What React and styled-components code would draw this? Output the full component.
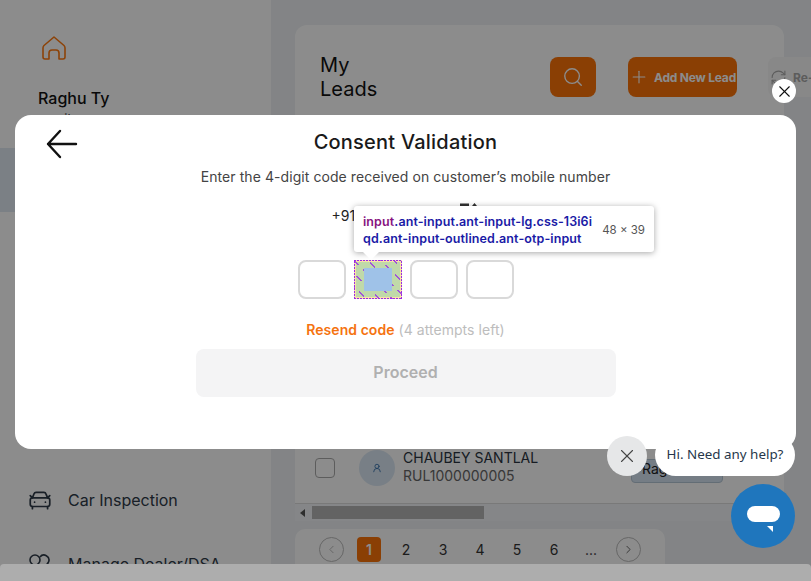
import React from 'react';
import styled, { createGlobalStyle } from 'styled-components';
import { CarFront, Search, Plus, RefreshCw, X, ChevronLeft, ChevronRight, ChevronDown, UserRound } from 'lucide-react';

const GlobalStyle = createGlobalStyle`
  html, body { margin: 0; padding: 0; height: 100%; overflow: hidden; }
  body { font-family: Inter, "Liberation Sans", sans-serif; background: #eef1f4; }
  * { box-sizing: border-box; }
`;

const Page = styled.div`
  display: flex;
  width: 811px;
  height: 581px;
  overflow: hidden;
  background: #eef1f4;
`;

const Sidebar = styled.aside`
  flex: 0 0 271px;
  display: flex;
  flex-direction: column;
  background: #fff;
  padding-top: 36px;
`;

const LogoMark = styled.svg`
  flex: none;
  display: block;
  width: 24px;
  height: 24px;
  margin-left: 42px;
  color: #ff7a10;
`;

const UserName = styled.div`
  margin: 28px 0 0 38px;
  font-size: 16px;
  line-height: 20px;
  font-weight: 500;
  color: #111;
`;

const UserRole = styled.div`
  margin: 3px 0 0 38px;
  font-size: 13px;
  line-height: 16px;
  color: #444;
`;

const ActiveItem = styled.div`
  flex: none;
  margin-top: 21px;
  height: 64px;
  background: #e0e9f2;
`;

const NavList = styled.nav`
  margin-top: 277px;
  display: flex;
  flex-direction: column;
  gap: 42px;
  padding-left: 27px;
`;

const NavItem = styled.div`
  display: flex;
  align-items: center;
  gap: 15px;
  height: 22px;
  font-size: 16px;
  color: #2e3a47;
`;

const Main = styled.main`
  flex: 1;
  min-width: 0;
  padding: 25px 27px 0 24px;
  display: flex;
  flex-direction: column;
  & > * { flex: none; }
`;

const HeaderCard = styled.section`
  height: 414px;
  border-radius: 12px 12px 0 0;
  background: #fff;
  display: flex;
  align-items: flex-start;
  padding: 28px 0 0 25px;
`;

const Heading = styled.h1`
  flex: none;
  margin: 0;
  width: 70px;
  font-size: 20px;
  line-height: 24px;
  font-weight: 400;
  color: #111;
`;

const OrangeButton = styled.div`
  flex: none;
  display: flex;
  align-items: center;
  justify-content: center;
  height: 40px;
  margin-top: 4px;
  border-radius: 8px;
  background: #fb7309;
  color: #fff;
  font-size: 12px;
  font-weight: 700;
  letter-spacing: -0.2px;
  white-space: nowrap;
`;

const SearchButton = styled(OrangeButton)`
  width: 46px;
  margin-left: 160px;
`;

const AddButton = styled(OrangeButton)`
  width: 109px;
  margin-left: 32px;
  gap: 5px;
`;

const Reassign = styled.div`
  flex: none;
  display: flex;
  align-items: center;
  gap: 6px;
  height: 40px;
  width: 90px;
  padding-left: 2px;
  margin: 4px 0 0 31px;
  border-radius: 8px;
  background: #f7f7f7;
  font-size: 12px;
  font-weight: 700;
  color: #a8a8a8;
  white-space: nowrap;
`;

const Row = styled.div`
  height: 64px;
  padding: 0 0 6px 20px;
  background: #fff;
  display: flex;
  align-items: center;
  gap: 24px;
`;

const Check = styled.div`
  flex: none;
  width: 20px;
  height: 20px;
  border: 1px solid #aaa;
  border-radius: 4px;
  background: #fff;
`;

const Avatar = styled.div`
  flex: none;
  width: 36px;
  height: 36px;
  border-radius: 50%;
  background: #dbe8f4;
  color: #2f6ba8;
  display: flex;
  align-items: center;
  justify-content: center;
`;

const LeadInfo = styled.div`
  flex: none;
  width: 209px;
  margin: -2px 0 0 -16px;
  font-size: 14px;
  line-height: 18px;
  color: #2a3440;
`;

const LeadId = styled.div`
  color: #666;
`;

const AgentChip = styled.div`
  flex: none;
  display: flex;
  align-items: center;
  justify-content: space-between;
  width: 92px;
  height: 24px;
  padding: 0 8px 5px 10px;
  margin: 6px 0 0 -5px;
  border: 1px solid #b5c6d6;
  border-radius: 4px;
  background: #d5e4f2;
  font-size: 14px;
  color: #222;
`;

const ScrollTrack = styled.div`
  height: 18px;
  background: #f3f5f7;
  border-top: 1px solid #ddd;
  display: flex;
  align-items: center;
  padding-left: 5px;
  gap: 7px;
`;

const ScrollArrow = styled.span`
  width: 0;
  height: 0;
  border: 4px solid transparent;
  border-right: 5px solid #555;
  border-left: 0;
`;

const ScrollThumb = styled.div`
  width: 172px;
  height: 13px;
  background: #b5b5b5;
`;

const Pager = styled.div`
  display: flex;
  align-items: center;
  gap: 13px;
  width: 370px;
  height: 60px;
  margin-top: 8px;
  padding: 0 0 19px 24px;
  background: #fff;
  border-radius: 10px 10px 0 0;
`;

const PageArrow = styled.div`
  width: 25px;
  height: 25px;
  border: 1px solid #bbb;
  border-radius: 50%;
  display: flex;
  align-items: center;
  justify-content: center;
  color: ${({ $dark }) => ($dark ? '#444' : '#aaa')};
`;

const PageNumber = styled.div`
  width: 24px;
  height: 25px;
  display: flex;
  align-items: center;
  justify-content: center;
  border-radius: 4px;
  font-size: 14px;
  font-weight: ${({ $active }) => ($active ? 600 : 400)};
  background: ${({ $active }) => ($active ? '#fb7309' : 'transparent')};
  color: ${({ $active }) => ($active ? '#fff' : '#333')};
`;

const Mask = styled.div`
  position: fixed;
  inset: 0;
  background: rgba(0, 0, 0, 0.45);
`;

const BottomBar = styled.div`
  position: fixed;
  left: 0;
  right: 0;
  bottom: 0;
  height: 17px;
  border-radius: 4px 4px 0 0;
  background: #adadad;
`;

const CloseBadge = styled.button`
  position: fixed;
  left: 772px;
  top: 79px;
  width: 24px;
  height: 24px;
  padding: 0;
  border: 0;
  border-radius: 50%;
  background: #fff;
  color: #111;
  display: flex;
  align-items: center;
  justify-content: center;
`;

const Modal = styled.div`
  position: fixed;
  left: 15px;
  top: 115px;
  width: 781px;
  height: 334px;
  padding-top: 14px;
  border-radius: 16px;
  background: #fff;
  display: flex;
  flex-direction: column;
  align-items: center;
`;

const BackArrow = styled.svg`
  position: absolute;
  left: 31px;
  top: 14px;
  width: 32px;
  height: 30px;
`;

const Title = styled.h2`
  margin: 0;
  font-size: 20px;
  line-height: 26px;
  font-weight: 500;
  letter-spacing: 0.22px;
  color: #1a1a1a;
`;

const Subtitle = styled.p`
  margin: 12px 0 0;
  font-size: 14px;
  line-height: 20px;
  letter-spacing: 0.07px;
  color: #444;
`;

const PhoneLine = styled.div`
  display: flex;
  align-items: center;
  justify-content: space-between;
  width: 148px;
  height: 20px;
  margin-top: 18px;
  font-size: 14px;
  color: #222;
`;

const EditGlyph = styled.svg`
  width: 20px;
  height: 24px;
`;

const OtpRow = styled.div`
  display: flex;
  gap: 8px;
  margin-top: 35px;
`;

const OtpBox = styled.div`
  width: 48px;
  height: 39px;
  border: 2px solid #d9d9d9;
  border-radius: 8px;
  background: #fff;
`;

const OtpInspected = styled.div`
  position: relative;
  width: 48px;
  height: 39px;
  background: #f8e2a8;
  padding: 2px;
  &::after {
    content: '';
    position: absolute;
    inset: 0;
    background:
      repeating-linear-gradient(90deg, #9a2be2 0 2px, transparent 2px 3px) top / 100% 1px no-repeat,
      repeating-linear-gradient(90deg, #9a2be2 0 2px, transparent 2px 3px) bottom / 100% 1px no-repeat,
      repeating-linear-gradient(0deg, #9a2be2 0 2px, transparent 2px 3px) left / 1px 100% no-repeat,
      repeating-linear-gradient(0deg, #9a2be2 0 2px, transparent 2px 3px) right / 1px 100% no-repeat;
  }
`;

const OtpPadding = styled.div`
  width: 100%;
  height: 100%;
  padding: 6px 8px;
  background: #c0d9a9;
`;

const OtpContent = styled.div`
  position: relative;
  z-index: 1;
  width: 100%;
  height: 100%;
  background: #9fc2e8;
`;

const OtpStripes = styled.div`
  position: absolute;
  inset: 0;
  background: repeating-linear-gradient(
    45deg,
    transparent 0 8px,
    rgba(150, 50, 230, 0.8) 8px 9.4px
  );
  mask: repeating-linear-gradient(135deg, #000 0 7px, transparent 7px 13px);
`;

const Tooltip = styled.div`
  position: fixed;
  left: 354px;
  top: 206px;
  width: 300px;
  height: 46px;
  padding: 7px 9px 0;
  display: flex;
  justify-content: space-between;
  background: #fff;
  border-radius: 3px;
  box-shadow: 0 1px 6px rgba(0, 0, 0, 0.35);
  &::after {
    content: '';
    position: absolute;
    left: 9px;
    bottom: -8px;
    border: 8px solid transparent;
    border-bottom: 0;
    border-top-color: #fff;
  }
`;

const Selector = styled.div`
  width: 234px;
  font-size: 12.5px;
  line-height: 17px;
  font-weight: 600;
  letter-spacing: 0.1px;
  color: #1a1aa6;
  word-break: break-all;
`;

const Tag = styled.span`
  color: #881280;
`;

const Size = styled.div`
  margin: 10px 0 0;
  font-size: 11.5px;
  line-height: 14px;
  color: #555;
`;

const Resend = styled.div`
  margin-top: 22px;
  font-size: 14px;
  line-height: 18px;
  letter-spacing: 0.05px;
  color: #bdbdbd;
`;

const ResendLink = styled.span`
  color: #f57310;
  font-weight: 600;
`;

const Proceed = styled.div`
  width: 420px;
  height: 48px;
  margin-top: 10px;
  padding-bottom: 2px;
  border-radius: 8px;
  background: #f4f4f5;
  display: flex;
  align-items: center;
  justify-content: center;
  font-size: 16px;
  font-weight: 600;
  color: #b0b0b0;
`;

const ChatDismiss = styled.button`
  position: fixed;
  left: 607px;
  top: 436px;
  width: 40px;
  height: 40px;
  padding: 0;
  border: 0;
  border-radius: 50%;
  background: #e6e7e8;
  color: #444;
  display: flex;
  align-items: center;
  justify-content: center;
`;

const ChatBubble = styled.div`
  position: fixed;
  left: 655px;
  top: 434px;
  width: 140px;
  height: 42px;
  padding-bottom: 2px;
  border-radius: 21px;
  background: #fff;
  display: flex;
  align-items: center;
  justify-content: center;
  font-family: "Noto Sans", sans-serif;
  font-size: 13.4px;
  color: #26374a;
`;

const ChatButton = styled.div`
  position: fixed;
  left: 731px;
  top: 484px;
  width: 64px;
  height: 64px;
  border-radius: 50%;
  background: #1f76bd;
`;

const ChatGlyph = styled.svg`
  position: absolute;
  left: 16px;
  top: 22px;
  width: 33px;
  height: 26px;
`;

export default function App() {
  return (
    <>
      <GlobalStyle />
      <Page>
        <Sidebar>
          <LogoMark viewBox="0 0 24 24" fill="none" stroke="currentColor" strokeWidth="1.6" strokeLinejoin="round">
            <path d="M12 1 2 9.5Q1 10.5 1 12v9a2 2 0 0 0 2 2h4v-6a3 3 0 0 1 3-3h4a3 3 0 0 1 3 3v6h4a2 2 0 0 0 2-2v-9q0-1.5-1-2.5z" />
          </LogoMark>
          <UserName>Raghu Ty</UserName>
          <UserRole>email</UserRole>
          <ActiveItem />
          <NavList>
            <NavItem>
              <CarFront size={26} strokeWidth={1.6} />
              Car Inspection
            </NavItem>
            <NavItem>
              <svg width="26" height="22" viewBox="0 0 26 22" fill="none" stroke="currentColor" strokeWidth="1.6">
                <circle cx="8" cy="7" r="5" />
                <path d="M13 4a5 5 0 1 1 3 8" />
              </svg>
              Manage Dealer/DSA
            </NavItem>
          </NavList>
        </Sidebar>
        <Main>
          <HeaderCard>
            <Heading>My Leads</Heading>
            <SearchButton>
              <Search size={22} strokeWidth={1.5} />
            </SearchButton>
            <AddButton>
              <Plus size={20} strokeWidth={1.3} />
              Add New Lead
            </AddButton>
            <Reassign>
              <RefreshCw size={17} strokeWidth={1.5} />
              Re-assign
            </Reassign>
          </HeaderCard>
          <Row>
            <Check />
            <Avatar>
              <UserRound size={10} strokeWidth={2} />
            </Avatar>
            <LeadInfo>
              CHAUBEY SANTLAL
              <LeadId>RUL1000000005</LeadId>
            </LeadInfo>
            <AgentChip>
              Ragh
              <ChevronDown size={12} />
            </AgentChip>
          </Row>
          <ScrollTrack>
            <ScrollArrow />
            <ScrollThumb />
          </ScrollTrack>
          <Pager>
            <PageArrow>
              <ChevronLeft size={13} strokeWidth={1.5} />
            </PageArrow>
            <PageNumber $active>1</PageNumber>
            <PageNumber>2</PageNumber>
            <PageNumber>3</PageNumber>
            <PageNumber>4</PageNumber>
            <PageNumber>5</PageNumber>
            <PageNumber>6</PageNumber>
            <PageNumber>...</PageNumber>
            <PageArrow $dark>
              <ChevronRight size={13} strokeWidth={1.5} />
            </PageArrow>
          </Pager>
        </Main>
      </Page>
      <Mask />
      <CloseBadge aria-label="Close">
        <X size={19} strokeWidth={1.4} />
      </CloseBadge>
      <Modal>
        <BackArrow viewBox="0 0 32 30" fill="none" stroke="#111" strokeWidth="2.4" strokeLinecap="round" strokeLinejoin="round">
          <path d="M2 15h28M14 2 2 15l12 13" />
        </BackArrow>
        <Title>Consent Validation</Title>
        <Subtitle>Enter the 4-digit code received on customer’s mobile number</Subtitle>
        <PhoneLine>
          +91 XXXXXX
          <EditGlyph viewBox="0 0 20 24" fill="#333">
            <path d="M0 .5h9V3H0zM12 3l2.5-3L17 3z" />
          </EditGlyph>
        </PhoneLine>
        <OtpRow>
          <OtpBox />
          <OtpInspected>
            <OtpPadding>
              <OtpContent />
            </OtpPadding>
            <OtpStripes />
          </OtpInspected>
          <OtpBox />
          <OtpBox />
        </OtpRow>
        <Resend>
          <ResendLink>Resend code</ResendLink> (4 attempts left)
        </Resend>
        <Proceed>Proceed</Proceed>
      </Modal>
      <Tooltip>
        <Selector>
          <Tag>input</Tag>.ant-input.ant-input-lg.css-13i6iqd.ant-input-outlined.ant-otp-input
        </Selector>
        <Size>48 × 39</Size>
      </Tooltip>
      <ChatDismiss aria-label="Dismiss">
        <X size={22} strokeWidth={1.2} />
      </ChatDismiss>
      <ChatBubble>Hi. Need any help?</ChatBubble>
      <ChatButton>
        <ChatGlyph viewBox="0 0 33 26" fill="#fff">
          <rect x="0" y="0" width="33" height="16" rx="8" />
          <path d="M20 20h6v6z" />
        </ChatGlyph>
      </ChatButton>
      <BottomBar />
    </>
  );
}
